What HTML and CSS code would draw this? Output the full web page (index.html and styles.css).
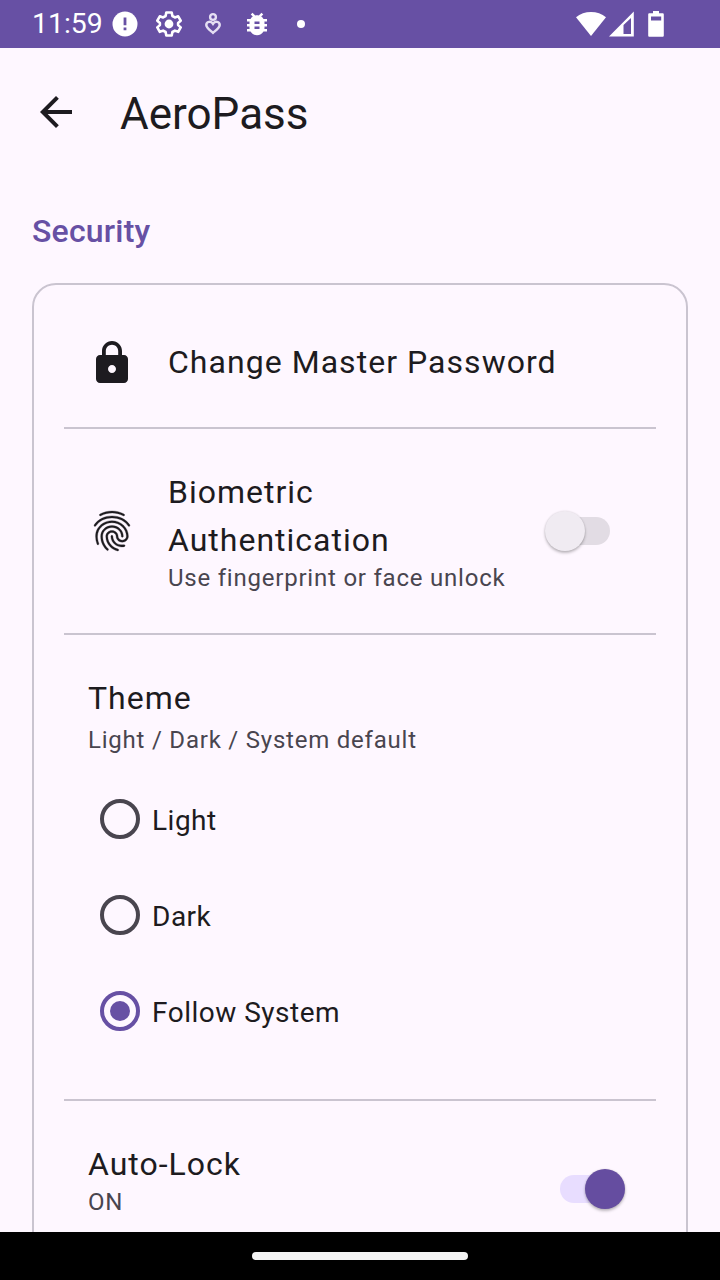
FILE: index.html
```html
<!DOCTYPE html>
<html lang="en">
<head>
<meta charset="utf-8">
<title>AeroPass</title>
<link rel="stylesheet" href="styles.css">
</head>
<body>
<div class="screen">
  <header class="status">
    <span class="clock">11:59</span>
    <div class="notices">
      <svg class="n-alert" viewBox="0 0 26 26"><circle cx="13" cy="13" r="12.5" fill="#fff"/><path d="M11.6 6.5h2.8v7.8h-2.8zM11.6 16.5h2.8v2.8h-2.8z" fill="#6750a4"/></svg>
      <svg class="n-gear" viewBox="0 0 26 26"><path d="M10.3 1.5h5.4l.7 3.500 2.500 1.400 3.300-1.100 2.500 4.400-2.600 2.200v2.200l2.600 2.300-2.500 4.400-3.300-1.200-2.500 1.400-.7 3.500h-5.400L9.600 21l-2.500-1.400-3.300 1.200-2.500-4.400 2.600-2.300v-2.200L1.300 9.700l2.500-4.400 3.300 1.100L9.600 5z" fill="none" stroke="#fff" stroke-width="2.600" stroke-linejoin="round"/><circle cx="13" cy="13" r="4.4" fill="#fff"/></svg>
      <svg class="n-heart" viewBox="0 0 18 24"><circle cx="9" cy="5" r="2.900" fill="none" stroke="#e5dff3" stroke-width="2.400"/><path d="M9 20.800C5.500 17.800 2.300 15.700 2.300 13c0-3.600 4.700-4.300 6.700-1.200 2-3.100 6.700-2.400 6.700 1.200 0 2.700-3.200 4.800-6.700 7.800z" fill="none" stroke="#e5dff3" stroke-width="2.500"/></svg>
      <svg class="n-bug" viewBox="0 0 24 24"><path d="M20 8h-2.810c-.45-.78-1.070-1.450-1.820-1.960L17 4.410 15.590 3l-2.170 2.170C12.960 5.060 12.490 5 12 5s-.96.060-1.410.170L8.410 3 7 4.410l1.620 1.630C7.880 6.550 7.260 7.220 6.810 8H4v2h2.090c-.05.33-.09.66-.09 1v1H4v2h2v1c0 .34.040.67.090 1H4v2h2.810c1.040 1.790 2.970 3 5.190 3s4.150-1.210 5.190-3H20v-2h-2.090c.05-.33.09-.66.09-1v-1h2v-2h-2v-1c0-.34-.04-.67-.09-1H20V8zm-6 8h-4v-2h4v2zm0-4h-4v-2h4v2z" fill="#fff"/></svg>
      <i class="dot"></i>
    </div>
    <svg class="signals" viewBox="0 0 90 26"><path d="M0 6.300C8-.8 22-.8 30 6.300L15 25z"/><path fill-rule="evenodd" d="M57.800.5V25.500H33zM47.500 14v9H55V7z"/><path fill-rule="evenodd" d="M77 0h6v2.200h3.500c.8 0 1.300.500 1.300 1.300v21c0 .8-.5 1.300-1.300 1.300h-13c-.8 0-1.300-.5-1.300-1.300v-21c0-.8.5-1.300 1.300-1.300H77zM75 5.500v4h10.200v-4z"/></svg>
  </header>

  <div class="appbar">
    <svg class="icon" viewBox="0 0 24 24"><path d="M20 11H7.830l5.590-5.590L12 4l-8 8 8 8 1.410-1.410L7.830 13H20v-2z"/></svg>
    <h1>AeroPass</h1>
  </div>

  <main class="content">
    <h2>Security</h2>
    <section class="card">
      <div class="row row-password">
        <svg class="icon" viewBox="0 0 24 24"><path d="M18 8h-1V6c0-2.760-2.240-5-5-5S7 3.240 7 6v2H6c-1.100 0-2 .9-2 2v10c0 1.100.9 2 2 2h12c1.100 0 2-.9 2-2V10c0-1.100-.9-2-2-2zm-6 9c-1.100 0-2-.9-2-2s.9-2 2-2 2 .9 2 2-.9 2-2 2zm3.100-9H8.900V6c0-1.710 1.390-3.100 3.100-3.100s3.100 1.390 3.100 3.100v2z"/></svg>
        <div class="title">Change Master Password</div>
      </div>
      <div class="row row-biometric">
        <svg class="icon fingerprint" viewBox="0 0 24 24"><path d="M17.810 4.470c-.08 0-.16-.02-.23-.06C15.660 3.420 14 3 12.010 3c-1.980 0-3.860.47-5.570 1.410-.24.130-.54.040-.68-.2-.13-.24-.04-.55.200-.68C7.820 2.520 9.860 2 12.010 2c2.130 0 3.990.47 6.030 1.520.25.130.34.430.21.670-.09.180-.26.280-.44.280zM3.500 9.720c-.1 0-.2-.03-.29-.09-.23-.16-.28-.47-.12-.7.990-1.400 2.250-2.500 3.750-3.270C9.980 4.040 14 4.030 17.150 5.650c1.500.77 2.760 1.860 3.750 3.250.16.220.11.540-.12.700-.23.160-.54.110-.7-.12-.9-1.260-2.040-2.250-3.390-2.940-2.870-1.470-6.540-1.470-9.400.01-1.360.7-2.500 1.700-3.400 2.960-.08.140-.23.210-.39.210zm6.250 12.070c-.13 0-.26-.05-.35-.15-.87-.87-1.340-1.430-2.010-2.640-.69-1.230-1.050-2.730-1.050-4.340 0-2.970 2.540-5.390 5.660-5.390s5.660 2.420 5.660 5.390c0 .28-.22.500-.5.500s-.5-.22-.5-.5c0-2.420-2.090-4.390-4.660-4.390-2.570 0-4.660 1.970-4.660 4.390 0 1.440.32 2.770.93 3.850.64 1.150 1.080 1.640 1.850 2.420.19.200.19.510 0 .71-.11.100-.24.150-.37.150zm7.170-1.850c-1.190 0-2.240-.3-3.100-.89-1.490-1.010-2.380-2.650-2.380-4.390 0-.28.220-.5.500-.5s.5.220.5.500c0 1.410.72 2.740 1.940 3.560.71.480 1.540.71 2.540.71.240 0 .64-.03 1.040-.1.270-.05.530.13.580.41.050.27-.13.530-.41.580-.57.110-1.070.12-1.210.12zM14.910 22c-.04 0-.09-.01-.13-.02-1.590-.44-2.630-1.030-3.720-2.100-1.400-1.390-2.170-3.240-2.170-5.220 0-1.620 1.380-2.940 3.080-2.940 1.700 0 3.080 1.320 3.080 2.940 0 1.070.93 1.940 2.080 1.940s2.080-.87 2.080-1.940c0-3.770-3.250-6.830-7.250-6.830-2.840 0-5.440 1.580-6.610 4.030-.39.810-.59 1.760-.59 2.800 0 .78.070 2.010.67 3.610.1.260-.03.550-.29.640-.26.100-.55-.04-.64-.29-.49-1.310-.73-2.610-.73-3.960 0-1.200.23-2.290.68-3.240 1.330-2.790 4.280-4.600 7.510-4.600 4.550 0 8.250 3.510 8.250 7.830 0 1.620-1.380 2.940-3.080 2.940s-3.080-1.320-3.080-2.940c0-1.070-.93-1.940-2.080-1.940s-2.080.87-2.080 1.940c0 1.710.66 3.310 1.870 4.510.95.940 1.860 1.460 3.270 1.850.27.070.42.350.35.610-.05.230-.26.380-.47.380z"/></svg>
        <div class="grow">
          <div class="title">Biometric Authentication</div>
          <div class="sub">Use fingerprint or face unlock</div>
        </div>
        <div class="switch"><i class="knob"></i></div>
      </div>
      <div class="theme">
        <div class="title">Theme</div>
        <div class="sub">Light / Dark / System default</div>
        <div class="options">
          <label class="option"><i class="radio"></i><span>Light</span></label>
          <label class="option"><i class="radio"></i><span>Dark</span></label>
          <label class="option"><i class="radio on"></i><span>Follow System</span></label>
        </div>
      </div>
      <div class="row row-lock">
        <div class="grow">
          <div class="title">Auto-Lock</div>
          <div class="sub">ON</div>
        </div>
        <div class="switch on"><i class="knob"></i></div>
      </div>
    </section>
  </main>
  <footer class="navbar"><i class="handle"></i></footer>
</div>
</body>
</html>
```
FILE: styles.css
```css
* { box-sizing: border-box; }
body { margin: 0; }
h1, h2 { margin: 0; font-weight: 400; }
.screen {
  display: flex;
  flex-direction: column;
  width: 720px;
  height: 1280px;
  overflow: hidden;
  background: #fef7ff;
  color: #1d1b20;
  font-family: Roboto, sans-serif;
}
.status {
  display: flex;
  align-items: center;
  flex: none;
  height: 48px;
  padding: 0 54px 0 32px;
  background: #6750a4;
  color: #fff;
}
.clock { width: 80px; font-size: 28.4px; line-height: 48px; white-space: nowrap; }
.notices { display: flex; align-items: center; flex: 1; }
.n-alert { width: 26px; height: 26px; }
.n-gear { width: 26px; height: 26px; margin-left: 18px; }
.n-heart { width: 18px; height: 24px; margin-left: 22px; }
.n-bug { width: 30px; height: 30px; margin-left: 20px; }
.dot { width: 8px; height: 8px; margin-left: 25px; border-radius: 50%; background: #fff; }
.signals { width: 90px; height: 26px; fill: #fff; }
.icon { flex: none; width: 48px; height: 48px; fill: #1d1b20; }
.fingerprint { stroke: #1d1b20; stroke-width: .15; }
.appbar {
  display: flex;
  align-items: center;
  flex: none;
  gap: 40px;
  height: 128px;
  padding: 0 32px;
}
.appbar h1 { padding-top: 3px; font-size: 44px; line-height: 56px; }
.content { flex: 1; min-height: 0; padding: 31px 32px 0; overflow: hidden; }
h2 {
  margin-bottom: 28px;
  color: #6750a4;
  font-size: 32px;
  font-weight: 500;
  line-height: 48px;
  letter-spacing: .2px;
}
.card {
  height: 1100px;
  padding: 0 30px;
  border: 2px solid #cac4d0;
  border-radius: 24px;
}
.row { display: flex; align-items: center; padding: 0 24px; }
.row-password { height: 144px; padding-top: 14px; border-bottom: 2px solid #cac4d0; gap: 32px; }
.row-password .title { padding-bottom: 2px; letter-spacing: 1.04px; }
.row-biometric { height: 206px; border-bottom: 2px solid #cac4d0; gap: 32px; }
.grow { flex: 1; }
.title { font-size: 32px; line-height: 48px; letter-spacing: 1px; }
.sub { color: #49454f; font-size: 24px; line-height: 32px; letter-spacing: .78px; }
.row-biometric .grow { white-space: nowrap; }
.row-biometric .title { width: 300px; white-space: normal; }
.row-biometric .sub { margin-top: -2px; }
.row-biometric .switch { margin-right: 22px; }
.theme { height: 466px; padding: 39px 24px 0; border-bottom: 2px solid #cac4d0; }
.theme .sub { margin-top: 2px; }
.options { padding-top: 15px; }
.option {
  display: flex;
  align-items: center;
  gap: 12px;
  height: 96px;
  padding-left: 12px;
  font-size: 28px;
  letter-spacing: .5px;
}
.option span { padding-top: 2px; }
.radio {
  display: grid;
  place-items: center;
  width: 40px;
  height: 40px;
  border: 4px solid #49454f;
  border-radius: 50%;
}
.radio.on { border-color: #6750a4; }
.radio.on::after {
  width: 20px;
  height: 20px;
  border-radius: 50%;
  background: #6750a4;
  content: "";
}
.row-lock { align-items: flex-start; padding-top: 39px; }
.row-lock .sub { margin-top: -2px; }
.row-lock .switch { margin: 35px 8px 0 0; }
.switch {
  display: flex;
  align-items: center;
  flex: none;
  width: 64px;
  height: 28px;
  border-radius: 14px;
  background: #e2dce4;
}
.switch.on { justify-content: flex-end; background: #e8ddff; }
.knob {
  flex: none;
  width: 40px;
  height: 40px;
  margin-left: -1px;
  border-radius: 50%;
  background: #f0ebf2;
  box-shadow: 0 2px 3px rgba(0, 0, 0, .25), 0 0 2px rgba(0, 0, 0, .12);
}
.switch.on .knob { margin-right: -1px; background: #654da0; }
.navbar {
  display: grid;
  place-items: center;
  flex: none;
  height: 48px;
  background: #000;
}
.handle { width: 216px; height: 8px; border-radius: 4px; background: #f5f5f5; }
```
